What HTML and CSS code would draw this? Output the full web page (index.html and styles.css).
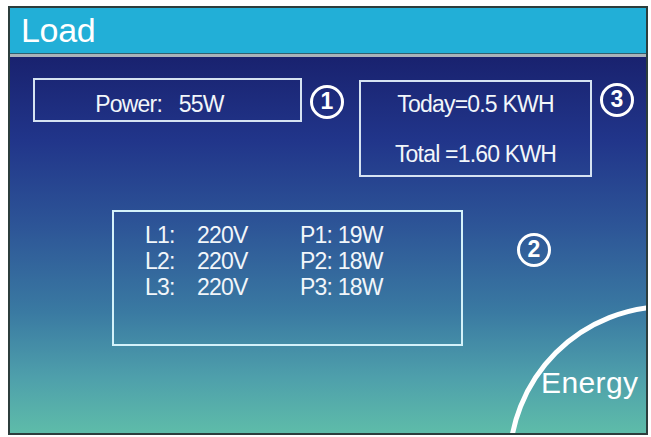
FILE: index.html
```
<!DOCTYPE html>
<html lang="en">
<head>
    <meta name="viewport" content="width=device-width, initial-scale=1">
    <link rel="stylesheet" href="styles.css">
</head>
<body>
    <div class="screen">
        <div class="title">Load</div>

        <div class="panel">
            <div class="row top-row">
                <div class="box power-box">Power:&nbsp;&nbsp; 55W</div>
                <div class="num num-1">1</div>
                <div class="box energy-box">
                    <div>Today=0.5 KWH</div>
                    <div>Total =1.60 KWH</div>
                </div>
                <div class="num num-3">3</div>
            </div>

            <div class="row mid-row">
                <div class="box phase-box">
                    <div class="phase-grid">
                        <span>L1:</span><span>220V</span><span>P1: 19W</span>
                        <span>L2:</span><span>220V</span><span>P2: 18W</span>
                        <span>L3:</span><span>220V</span><span>P3: 18W</span>
                    </div>
                </div>
                <div class="num num-2">2</div>
            </div>

            <!-- energy button, a quarter circle in the corner -->
            <div class="energy-arc"></div>
            <div class="energy-label">Energy</div>
        </div>
    </div>
</body>
</html>
```

FILE: styles.css
```
html, body {
    margin: 0;
    background: #ffffff;
}

body {
    padding: 6px 0 0 8px;
    font-family: "Liberation Sans", Arial, sans-serif;
    color: #f2f6fa;
}

.screen {
    width: 640px;
    height: 429px;
    box-sizing: border-box;
    border: 2px solid #2c3d3c;
    display: flex;
    flex-direction: column;
    overflow: hidden;
}

.title {
    height: 46px;
    box-sizing: border-box;
    background: #22afd7;
    border-bottom: 1px solid #2f5f70;
    padding: 3px 0 0 11px;
    font-size: 34px;
    color: #ffffff;
    letter-spacing: -0.3px;
}

.panel {
    flex: 1;
    position: relative;
    border-top: 3px solid #a9b2b9;
    background: linear-gradient(180deg, #19226f 0%, #21358a 22%, #2d5597 45%, #3a7aa2 68%, #4e9fab 85%, #5ebca9 100%);
}

.row {
    display: flex;
    align-items: flex-start;
}

.box {
    box-sizing: border-box;
    border: 2px solid #d6e3f2;
    font-size: 23px;
    letter-spacing: -0.8px;
    line-height: 26px;
}

.top-row {
    padding: 21px 0 0 23px;
}

.power-box {
    width: 269px;
    height: 44px;
    text-align: center;
    padding: 11px 16px 0 0;
}

.energy-box {
    width: 233px;
    height: 97px;
    margin-top: 2px;
    text-align: center;
    padding: 9px 0 0 0;
    display: flex;
    flex-direction: column;
    gap: 24px;
}

.num {
    width: 34px;
    height: 34px;
    box-sizing: border-box;
    border: 3.5px solid #ffffff;
    border-radius: 50%;
    font-size: 23px;
    font-weight: bold;
    line-height: 27px;
    text-align: center;
    color: #ffffff;
}

.num-1 {
    margin: 7px 15px 0 8px;
}

.num-3 {
    margin: 5px 0 0 8px;
}

.mid-row {
    padding: 33px 0 0 102px;
}

.phase-box {
    width: 351px;
    height: 136px;
    border-color: #d4f2fa;
    padding: 10px 0 0 31px;
}

.phase-grid {
    display: grid;
    grid-template-columns: 52px 103px auto;
}

.num-2 {
    margin: 23px 0 0 54px;
}

.energy-arc {
    position: absolute;
    left: 497px;
    top: 247px;
    width: 321px;
    height: 321px;
    box-sizing: border-box;
    border: 5px solid #ffffff;
    border-radius: 50%;
}

.energy-label {
    position: absolute;
    left: 531px;
    top: 309px;
    font-size: 30px;
    letter-spacing: 0.4px;
    color: #ffffff;
}
```
